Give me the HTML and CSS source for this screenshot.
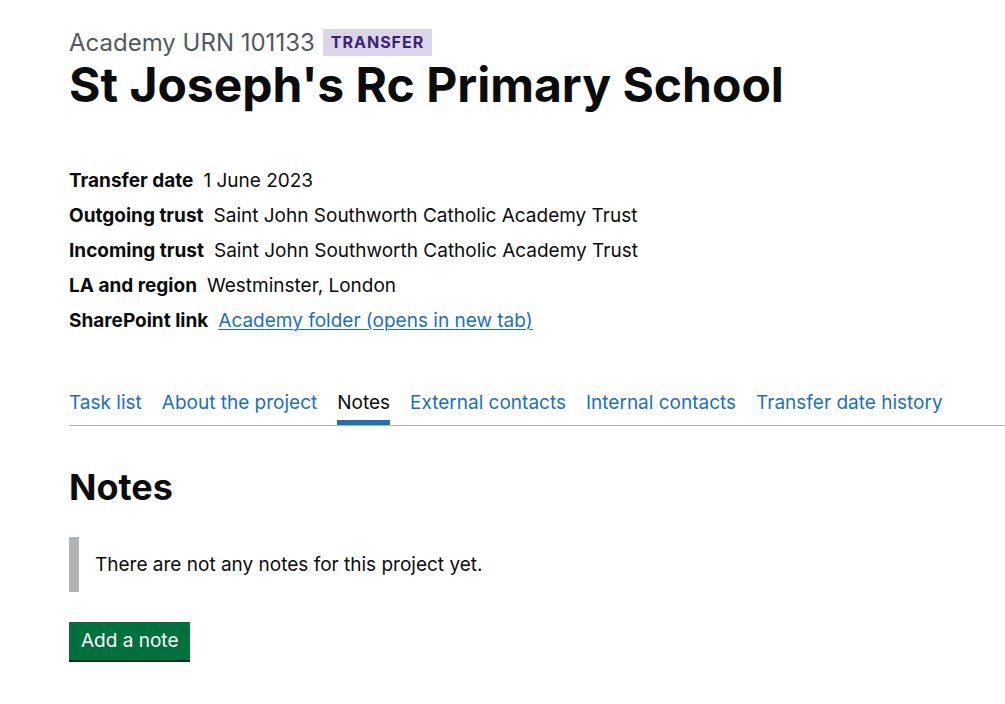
FILE: index.html
```html
<!DOCTYPE html>
<html lang="en">
<head>
<meta charset="utf-8">
<title>St Joseph's Rc Primary School</title>
<link rel="stylesheet" href="styles.css">
</head>
<body>
<main class="page">
  <header class="project-header">
    <p class="caption">Academy URN 101133 <strong class="tag">Transfer</strong></p>
    <h1 class="title">St Joseph's Rc Primary School</h1>
  </header>

  <dl class="summary">
    <div class="summary-row"><dt>Transfer date</dt><dd>1 June 2023</dd></div>
    <div class="summary-row"><dt>Outgoing trust</dt><dd>Saint John Southworth Catholic Academy Trust</dd></div>
    <div class="summary-row"><dt>Incoming trust</dt><dd>Saint John Southworth Catholic Academy Trust</dd></div>
    <div class="summary-row"><dt>LA and region</dt><dd>Westminster, London</dd></div>
    <div class="summary-row"><dt>SharePoint link</dt><dd><a class="link" href="#">Academy folder (opens in new tab)</a></dd></div>
  </dl>

  <nav class="subnav">
    <ul class="subnav-list">
      <li class="subnav-item"><a class="subnav-link" href="#">Task list</a></li>
      <li class="subnav-item"><a class="subnav-link" href="#">About the project</a></li>
      <li class="subnav-item"><a class="subnav-link current" href="#">Notes</a></li>
      <li class="subnav-item"><a class="subnav-link" href="#">External contacts</a></li>
      <li class="subnav-item"><a class="subnav-link" href="#">Internal contacts</a></li>
      <li class="subnav-item"><a class="subnav-link" href="#">Transfer date history</a></li>
    </ul>
  </nav>

  <section class="notes">
    <h2 class="heading-l">Notes</h2>
    <div class="inset">There are not any notes for this project yet.</div>
    <a class="button" href="#">Add a note</a>
  </section>
</main>
</body>
</html>
```

FILE: styles.css
```css
* { box-sizing: border-box; }

html, body {
  margin: 0;
  padding: 0;
  background: #ffffff;
}

body {
  font-family: "Inter", "Liberation Sans", sans-serif;
  color: #0b0c0c;
  -webkit-font-smoothing: antialiased;
}

.page {
  padding: 29px 0 40px 69px;
}

.project-header {
  margin: 0;
}

.caption {
  margin: 0;
  font-size: 24px;
  line-height: 27px;
  height: 27px;
  color: #505a5f;
  display: flex;
  align-items: center;
  gap: 8px;
}

.tag {
  display: inline-block;
  background: #dbd5e9;
  color: #3d2375;
  font-size: 16px;
  font-weight: 700;
  letter-spacing: 1px;
  text-transform: uppercase;
  line-height: 19px;
  padding: 4px 8px 4px 8px;
}

.title {
  margin: 0;
  font-size: 48px;
  font-weight: 700;
  line-height: 58px;
}

.summary {
  margin: 54px 0 0 0;
  font-size: 19px;
  line-height: 25px;
}

.summary-row {
  display: flex;
  gap: 10px;
  margin-bottom: 10px;
}

.summary-row dt {
  font-weight: 700;
}

.summary-row dd {
  margin: 0;
}

.link {
  color: #1d70b8;
  text-decoration: underline;
  text-underline-offset: 2px;
  text-decoration-thickness: 1px;
}

.subnav {
  margin-top: 57px;
}

.subnav-list {
  list-style: none;
  margin: 0;
  padding: 0;
  display: flex;
  gap: 20px;
  border-bottom: 1px solid #b1b4b6;
}

.subnav-link {
  display: block;
  font-size: 19px;
  line-height: 25px;
  padding: 0 0 10px 0;
  color: #1d70b8;
  text-decoration: none;
}

.subnav-link.current {
  color: #0b0c0c;
  box-shadow: inset 0 -5px 0 #1d70b8;
}

.notes {
  padding-top: 41px;
}

.heading-l {
  margin: 0 0 30px 0;
  font-size: 36px;
  font-weight: 700;
  line-height: 40px;
}

.inset {
  border-left: 10px solid #b1b4b6;
  padding: 15px 0 15px 16px;
  font-size: 19px;
  line-height: 25px;
  margin-bottom: 30px;
}

.button {
  display: inline-block;
  background: #00703c;
  color: #ffffff;
  font-size: 19px;
  line-height: 20px;
  padding: 9px 12px 9px 12px;
  text-decoration: none;
  box-shadow: 0 2px 0 #002d18;
}
```
